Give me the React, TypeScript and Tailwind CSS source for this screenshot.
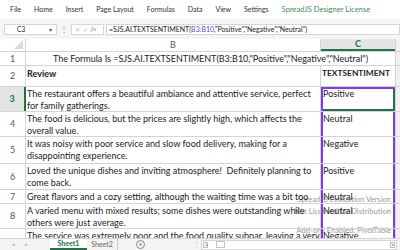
import React from "react";

const rows = [
  { n: 3, h: "h-[25px]", lines: ["The restaurant offers a beautiful ambiance and attentive service, perfect", "for family gatherings."], s: "Positive" },
  { n: 4, h: "h-[25px]", lines: ["The food is delicious, but the prices are slightly high, which affects the", "overall value."], s: "Neutral" },
  { n: 5, h: "h-[27px]", lines: ["It was noisy with poor service and slow food delivery, making for a", "disappointing experience."], s: "Negative" },
  { n: 6, h: "h-[26px]", lines: ["Loved the unique dishes and inviting atmosphere!\u00a0\u00a0Definitely planning to", "come back."], s: "Positive" },
  { n: 7, h: "h-[14px]", lines: ["Great flavors and a cozy setting, although the waiting time was a bit too"], s: "Neutral" },
  { n: 8, h: "h-[25px]", lines: ["A varied menu with mixed results; some dishes were outstanding while", "others were just average."], s: "Neutral" },
  { n: 9, h: "h-[25px]", lines: ["The service was extremely poor and the food quality subpar, leaving a very"], s: "Negative" },
];

const menu = ["File", "Home", "Insert", "Page Layout", "Formulas", "Data", "View", "Settings"];

export default function App() {
  return (
    <div className="w-[400px] h-[250px] overflow-hidden flex flex-col bg-white text-[#222] font-['Lato','Liberation_Sans',sans-serif]">
      {/* menu */}
      <div className="h-[19px] shrink-0 flex items-center pl-[10px] gap-[13px] text-[7px] text-[#333] bg-white whitespace-nowrap">
        {menu.map((m) => (
          <span key={m} className="shrink-0">{m}</span>
        ))}
        <span className="shrink-0 text-[#3f8c5a] text-[7.6px]">SpreadJS Designer License</span>
      </div>

      {/* formula bar */}
      <div className="h-[20px] shrink-0 flex items-center bg-[#f5f5f5] pl-[4px]">
        <div className="w-[53px] h-[11px] bg-white border border-[#d6d6d6] flex items-center text-[7px] text-[#333]">
          <span className="flex-1 text-center pr-[12px]">C3</span>
          <span className="text-[6px] pr-[4px] text-[#555]">▾</span>
        </div>
        <span className="w-[14px] text-center text-[8px] text-[#888]">⋮</span>
        <div className="w-[33px] h-[11px] bg-white border border-[#d6d6d6] flex items-center gap-[3px] pl-[3px] text-[6px] text-[#bbb]">
          <span>✕</span>
          <span>✓</span>
          <span className="italic text-[#6b8fbf] font-['Liberation_Serif',serif] text-[7px]">fx</span>
        </div>
        <div className="ml-[2px] flex-1 h-[11px] bg-white border border-[#d6d6d6] flex items-center pl-[2px] text-[7px] text-[#222] whitespace-nowrap overflow-hidden">
          =SJS.AI.TEXTSENTIMENT(<span className="text-[#6f45c9]">B3:B10</span>,"Positive","Negative","Neutral")
        </div>
      </div>

      {/* sheet */}
      <div className="relative flex-1 flex flex-col overflow-hidden">
        {/* watermark, drawn beneath the cell text */}
        <div className="absolute z-0 right-[9px] top-[154px] flex flex-col items-end text-[7.6px] leading-[12px] text-[#9a9a9a] whitespace-nowrap">
          <span>SpreadJS Evaluation Version</span>
          <span>Not Licensed for Distribution</span>
          <span className="mt-[7px]">Add-ons Enabled: PivotTable</span>
        </div>

        {/* column header */}
        <div className="relative z-10 h-[13px] flex shrink-0 border-b border-[#d4d4d4] text-[9px] text-[#555]">
          <div className="w-[26px] bg-white border-r border-[#d4d4d4] relative">
            <div className="absolute right-[2px] bottom-[2px] w-0 h-0 border-l-[9px] border-l-transparent border-b-[9px] border-b-[#d9d9d9]" />
          </div>
          <div className="w-[295px] flex items-center justify-center border-r border-[#d4d4d4]">B</div>
          <div className="w-[74px] flex items-center justify-center bg-[#e4e4e4] text-[#217346] font-bold border-b-2 border-[#217346]">C</div>
          <div className="flex-1 bg-[#f0f0f0] border-l border-[#d4d4d4]" />
        </div>

        {/* row 1 */}
        <div className="relative z-10 h-[14px] flex shrink-0 border-b border-[#d4d4d4]">
          <div className="w-[26px] flex items-center justify-center border-r border-[#d4d4d4] text-[9px] text-[#555]">1</div>
          <div className="w-[369px] flex items-center justify-center text-[9px] whitespace-nowrap">
            The Formula Is =SJS.AI.TEXTSENTIMENT(B3:B10,"Positive","Negative","Neutral")
          </div>
          <div className="flex-1 bg-[#f0f0f0] border-l border-[#d4d4d4]" />
        </div>

        {/* row 2 */}
        <div className="relative z-10 h-[21px] flex shrink-0 border-b border-[#d4d4d4]">
          <div className="w-[26px] flex items-center justify-center border-r border-[#d4d4d4] text-[9px] text-[#555]">2</div>
          <div className="w-[295px] pl-[1px] pt-[1px] text-[9px] font-bold border-r border-[#d4d4d4]">Review</div>
          <div className="w-[74px] pl-[1px] pt-[1px] text-[8.4px] font-bold whitespace-nowrap overflow-hidden">TEXTSENTIMENT</div>
          <div className="flex-1 bg-[#f0f0f0] border-l border-[#d4d4d4]" />
        </div>

        {rows.map((r) => {
          const sel = r.n === 3;
          return (
            <div key={r.n} className={`relative z-10 ${r.h} flex shrink-0 border-b border-[#d4d4d4]`}>
              <div
                className={
                  sel
                    ? "w-[26px] flex items-center justify-center border-r-2 border-[#217346] bg-[#e4e4e4] text-[9px] font-bold text-[#217346]"
                    : "w-[26px] flex items-center justify-center border-r border-[#d4d4d4] text-[9px] text-[#555]"
                }
              >
                {r.n === 9 ? "" : r.n}
              </div>
              <div className="w-[295px] pl-[1px] pt-[1px] text-[9px] leading-[11.5px] whitespace-nowrap overflow-hidden border-r border-[#d4d4d4]">
                {r.lines.map((l) => (
                  <div key={l}>{l}</div>
                ))}
              </div>
              <div
                className={
                  sel
                    ? "w-[74px] pl-[2px] pt-[1px] text-[9px] leading-[11.5px] shadow-[inset_2px_0_0_#7c3aed,inset_0_2px_0_#7c3aed,inset_-2px_0_0_#217346,inset_0_-2px_0_#217346]"
                    : "w-[74px] pl-[2px] pt-[1px] text-[9px] leading-[11.5px] shadow-[inset_2px_0_0_#7c3aed,inset_-2px_0_0_#7c3aed]"
                }
              >
                {r.s}
              </div>
              <div className="flex-1 bg-[#f0f0f0] border-l border-[#d4d4d4]" />
            </div>
          );
        })}
      </div>

      {/* tab bar */}
      <div className="h-[12px] shrink-0 flex items-center bg-[#f3f3f3] border-t border-[#d4d4d4] text-[7px] leading-none">
        <span className="ml-[12px] text-[5px] text-[#aaa]">◂</span>
        <span className="ml-[10px] text-[5px] text-[#aaa]">▸</span>
        <div className="ml-[22px] w-[37px] h-full bg-white flex items-center justify-center text-[#217346] font-bold border-b-2 border-[#217346]">
          Sheet1
        </div>
        <div className="w-[31px] h-full flex items-center justify-center text-[#666] border-r border-[#cfcfcf]">Sheet2</div>
        <span className="ml-[18px] w-[9px] h-[9px] rounded-full border border-[#888] flex items-center justify-center text-[7px] text-[#666]">+</span>
        <span className="ml-[48px] text-[7px] text-[#bbb]">⋮</span>
        <div className="ml-[1px] flex-1 h-[10px] mr-[3px] bg-white border border-[#d6d6d6] flex items-center">
          <span className="w-[5px] h-[6px] ml-[1px] border border-[#bbb] text-[4px] flex items-center justify-center text-[#777]">◂</span>
          <span className="ml-[8px] w-[9px] h-[7px] border border-[#c4c4c4] bg-white" />
          <span className="flex-1" />
          <span className="w-[5px] h-[6px] mr-[1px] border border-[#bbb] text-[4px] flex items-center justify-center text-[#777]">▸</span>
        </div>
      </div>
    </div>
  );
}
